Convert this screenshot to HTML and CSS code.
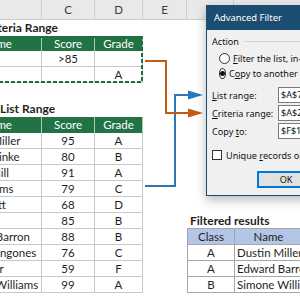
FILE: index.html
```html
<!DOCTYPE html>
<html>
<head>
<meta charset="utf-8">
<link rel="stylesheet" href="styles.css">
</head>
<body>
<div class="sheet">
  <div class="colheads">
    <div class="ch ch-b">B</div>
    <div class="ch ch-c">C</div>
    <div class="ch ch-d">D</div>
    <div class="ch ch-e">E</div>
    <div class="ch ch-f"></div>
    <div class="ch ch-g"></div>
  </div>
  <div class="content">
    <div class="left">
      <div class="label label-crit">Criteria Range</div>
      <div class="crit">
        <div class="tbl">
          <div class="cell hd">Name</div><div class="cell hd">Score</div><div class="cell hd">Grade</div>
          <div class="cell"></div><div class="cell">&gt;85</div><div class="cell"></div>
          <div class="cell"></div><div class="cell"></div><div class="cell">A</div>
        </div>
        <svg class="ants" width="190" height="47" viewBox="0 0 190 47"><rect x="1" y="1" width="188" height="45" fill="none" stroke="#1e6e3e" stroke-width="2" stroke-dasharray="4 2"/></svg>
      </div>
      <div class="label label-list">List Range</div>
      <div class="tbl list">
        <div class="cell hd">Name</div><div class="cell hd">Score</div><div class="cell hd">Grade</div>
        <div class="cell nm">Dustin Miller</div><div class="cell">95</div><div class="cell">A</div>
        <div class="cell nm">Frank Reinke</div><div class="cell">80</div><div class="cell">B</div>
        <div class="cell nm">Robert Hill</div><div class="cell">91</div><div class="cell">A</div>
        <div class="cell nm">Kyle Adams</div><div class="cell">79</div><div class="cell">C</div>
        <div class="cell nm">Luke Pratt</div><div class="cell">68</div><div class="cell">D</div>
        <div class="cell nm">Amy Lee</div><div class="cell">85</div><div class="cell">B</div>
        <div class="cell nm">Edward Barron</div><div class="cell">88</div><div class="cell">B</div>
        <div class="cell nm">Maria Bangones</div><div class="cell">76</div><div class="cell">C</div>
        <div class="cell nm">Lily Baker</div><div class="cell">59</div><div class="cell">F</div>
        <div class="cell nm">Simone Williams</div><div class="cell">99</div><div class="cell">A</div>
      </div>
    </div>
    <div class="gap"></div>
    <div class="results">
      <div class="rlabel">Filtered results</div>
      <div class="rtbl">
        <div class="rc rh">Class</div><div class="rc rh">Name</div>
        <div class="rc">A</div><div class="rc nm">Dustin Miller</div>
        <div class="rc">A</div><div class="rc nm">Edward Barron</div>
        <div class="rc">B</div><div class="rc nm">Simone Williams</div>
      </div>
    </div>
  </div>
</div>

<svg class="arrows" width="300" height="300" viewBox="0 0 300 300">
  <path d="M145 186 H175 V95 H191" fill="none" stroke="#2e75b6" stroke-width="2"/>
  <polygon points="188,90.5 203,95 188,99.5" fill="#2e75b6"/>
  <path d="M145 61 H166 V113 H191" fill="none" stroke="#c55a11" stroke-width="2"/>
  <polygon points="188,108.5 203,113 188,117.5" fill="#c55a11"/>
</svg>

<div class="dialog">
  <div class="titlebar">Advanced Filter</div>
  <div class="dbody">
    <div class="group"><span class="legend">Action</span><span class="gline"></span></div>
    <div class="opt"><span class="radio"></span><span><u>F</u>ilter the list, in-place</span></div>
    <div class="opt"><span class="radio on"></span><span>C<u>o</u>py to another location</span></div>
    <div class="field"><span class="flabel"><u>L</u>ist range:</span><span class="input">$A$7:$D$17</span></div>
    <div class="field"><span class="flabel"><u>C</u>riteria range:</span><span class="input">$A$2:$D$4</span></div>
    <div class="field"><span class="flabel">Copy <u>t</u>o:</span><span class="input">$F$1:$G$1</span></div>
    <div class="check"><span class="box"></span><span>Unique <u>r</u>ecords only</span></div>
    <div class="btns"><span class="btn ok">OK</span><span class="btn">Cancel</span></div>
  </div>
</div>
</body>
</html>
```

FILE: styles.css
```css
html, body {
  margin: 0;
  padding: 0;
}
body {
  width: 300px;
  height: 300px;
  overflow: hidden;
  position: relative;
  background: #ffffff;
  font-family: Lato, "Liberation Sans", sans-serif;
  color: #1f1f1f;
}
.sheet {
  width: 300px;
  height: 300px;
}
.colheads {
  display: flex;
  height: 20px;
  box-sizing: border-box;
  background: #e9e9e9;
  border-bottom: 1px solid #cdcdcd;
  margin-left: -60px;
  font-size: 11.5px;
  color: #3c3c3c;
}
.ch {
  box-sizing: border-box;
  flex: none;
  border-right: 1px solid #cdcdcd;
  display: flex;
  align-items: center;
  justify-content: center;
}
.ch-b { width: 102px; }
.ch-c { width: 53px; }
.ch-d { width: 48px; }
.ch-e { width: 44px; }
.ch-f { width: 47px; }
.ch-g { width: 70px; }

.content {
  display: grid;
  grid-template-columns: 190px 44px 115px;
  margin-left: -47px;
}
.left {
  display: flex;
  flex-direction: column;
}
.label {
  font-weight: 700;
  font-size: 12px;
  height: 16px;
  line-height: 16px;
  white-space: nowrap;
}
.label-crit { padding-left: 29px; }
.label-list {
  padding-left: 47px;
  margin-top: 17px;
  height: 17px;
  line-height: 17px;
}
.crit { position: relative; }
.ants {
  position: absolute;
  left: 0;
  top: 0;
}
.tbl {
  display: grid;
  grid-template-columns: 89px 53px 48px;
  font-size: 11.5px;
}
.cell {
  box-sizing: border-box;
  height: 16px;
  line-height: 15px;
  border-right: 1px solid #c8c8c8;
  border-bottom: 1px solid #c8c8c8;
  text-align: center;
  white-space: nowrap;
  overflow: hidden;
}
.cell.nm {
  text-align: left;
  padding-left: 2px;
}
.cell.hd {
  background: #217346;
  color: #ffffff;
  border-right-color: #a9cdb5;
  border-bottom: none;
  line-height: 16px;
}
.crit .cell.hd {
  height: 15px;
  line-height: 15px;
}

.results {
  align-self: end;
}
.rlabel {
  font-weight: 700;
  font-size: 12px;
  height: 14px;
  line-height: 13px;
  padding-left: 3px;
  white-space: nowrap;
}
.rtbl {
  display: grid;
  grid-template-columns: 47px 68px;
  border-left: 1px solid #a6a6a6;
  border-top: 1px solid #a6a6a6;
  font-size: 11.5px;
}
.rc {
  box-sizing: border-box;
  height: 16px;
  line-height: 15px;
  border-right: 1px solid #a6a6a6;
  border-bottom: 1px solid #a6a6a6;
  text-align: center;
  white-space: nowrap;
  overflow: hidden;
}
.rc.rh {
  background: #b4c6e7;
}
.rc.nm {
  text-align: left;
  padding-left: 2px;
}

.arrows {
  position: absolute;
  left: 0;
  top: 0;
}

.dialog {
  position: absolute;
  left: 206px;
  top: 5px;
  width: 120px;
  height: 191px;
  box-sizing: border-box;
  border: 1px solid #1b4d72;
  background: #f0f0f0;
  box-shadow: 0 4px 10px rgba(0, 0, 0, 0.28);
  font-family: "Noto Sans", "Open Sans", sans-serif;
  font-size: 9.1px;
  color: #111;
  white-space: nowrap;
}
.titlebar {
  height: 24px;
  line-height: 23px;
  background: #1b4d72;
  color: #ffffff;
  font-size: 9.4px;
  padding-left: 7px;
}
.dbody {
  padding: 5px 0 0 5px;
  display: flex;
  flex-direction: column;
}
.group {
  display: flex;
  align-items: center;
  height: 12px;
}
.gline {
  flex: 1;
  height: 1px;
  background: #d5d5d5;
  margin-left: 5px;
}
.opt {
  display: flex;
  align-items: center;
  height: 15px;
  padding-left: 7px;
}
.group + .opt { margin-top: 4px; }
.radio {
  width: 11px;
  height: 11px;
  box-sizing: border-box;
  border: 1px solid #333;
  border-radius: 50%;
  background: #fff;
  margin-right: 3px;
  display: flex;
  align-items: center;
  justify-content: center;
}
.radio.on::after {
  content: "";
  width: 5px;
  height: 5px;
  border-radius: 50%;
  background: #111;
}
.field {
  display: flex;
  align-items: center;
  height: 16px;
  margin-top: 2px;
}
.opt + .field { margin-top: 6px; }
.flabel {
  flex: none;
  width: 66px;
}
.input {
  flex: 1;
  min-width: 0;
  overflow: hidden;
  height: 16px;
  box-sizing: border-box;
  background: #fff;
  border: 1px solid #7a7a7a;
  padding-left: 2px;
  line-height: 14px;
}
.check {
  display: flex;
  align-items: center;
  height: 14px;
  margin-top: 9px;
}
.box {
  width: 10px;
  height: 10px;
  box-sizing: border-box;
  border: 1px solid #333;
  background: #fff;
  margin-right: 4px;
}
.btns {
  display: flex;
  margin-top: 9px;
  padding-left: 45px;
  gap: 6px;
}
.btn {
  flex: none;
  width: 58px;
  height: 17px;
  box-sizing: border-box;
  border: 1px solid #adadad;
  background: #e1e1e1;
  text-align: center;
  line-height: 15px;
}
.btn.ok {
  border: 2px solid #0078d7;
  line-height: 13px;
}
```
